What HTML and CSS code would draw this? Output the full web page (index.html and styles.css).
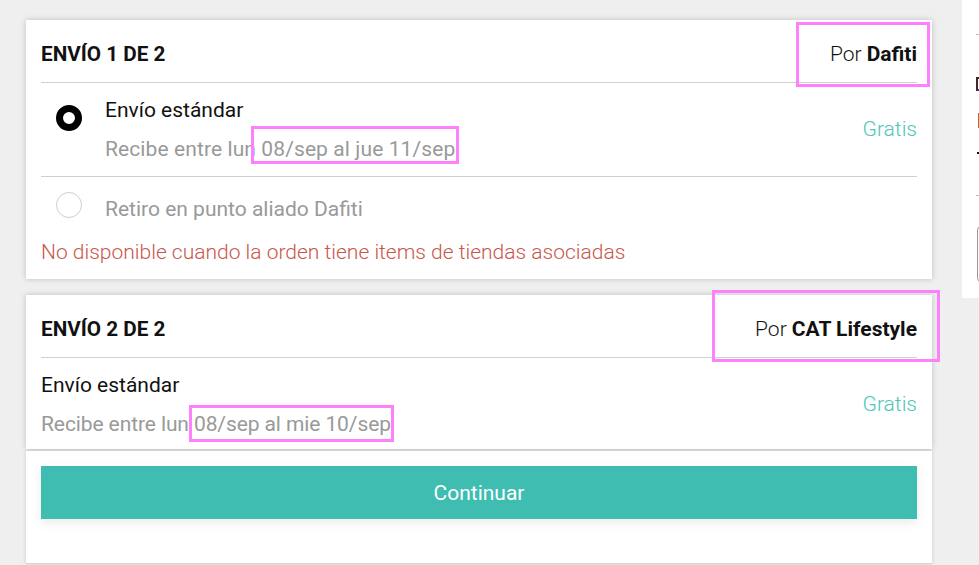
FILE: index.html
```html
<!DOCTYPE html>
<html lang="es">
<head>
<meta charset="utf-8">
<title>Envíos</title>
<link rel="stylesheet" href="styles.css">
</head>
<body>
<div class="page">
  <main class="checkout">
    <section class="card card-first">
      <header class="card-head">
        <h2 class="card-title">ENVÍO 1 DE 2</h2>
        <div class="seller">Por <b>Dafiti</b></div>
      </header>
      <div class="option option-selected">
        <span class="radio radio-on"></span>
        <div class="option-body">
          <div class="option-name">Envío estándar</div>
          <div class="option-date date-long">Recibe entre lun 08/sep al jue 11/sep</div>
        </div>
        <div class="price">Gratis</div>
      </div>
      <div class="option option-disabled">
        <span class="radio"></span>
        <div class="option-body">
          <div class="option-name">Retiro en punto aliado Dafiti</div>
        </div>
      </div>
      <p class="warning">No disponible cuando la orden tiene items de tiendas asociadas</p>
    </section>

    <section class="card card-second">
      <header class="card-head">
        <h2 class="card-title">ENVÍO 2 DE 2</h2>
        <div class="seller">Por <b>CAT Lifestyle</b></div>
      </header>
      <div class="option option-plain">
        <div class="option-body">
          <div class="option-name">Envío estándar</div>
          <div class="option-date date-short">Recibe entre lun 08/sep al mie 10/sep</div>
        </div>
        <div class="price">Gratis</div>
      </div>
    </section>

    <div class="actions">
      <button class="btn-continue" type="button">Continuar</button>
    </div>
  </main>

  <aside class="summary">
    <div class="sum-line"></div>
    <div class="sum-glyph"></div>
    <div class="sum-bar"></div>
    <div class="sum-dash"></div>
    <div class="sum-line sum-line-2"></div>
    <div class="sum-box"></div>
  </aside>
</div>

<div class="mark mark-1"></div>
<div class="mark mark-2"></div>
<div class="mark mark-3"></div>
<div class="mark mark-4"></div>
</body>
</html>
```

FILE: styles.css
```css
* { box-sizing: border-box; }

html, body {
  margin: 0;
  padding: 0;
  height: 100%;
}

body {
  background: #efefef;
  font-family: Roboto, "Liberation Sans", Arial, sans-serif;
  color: #111;
  overflow: hidden;
  position: relative;
}

.page {
  display: flex;
  align-items: flex-start;
  gap: 30px;
  padding-left: 26px;
}

.checkout {
  width: 906px;
  flex: none;
  padding-top: 20px;
  display: flex;
  flex-direction: column;
}

.card {
  background: #fff;
  padding: 0 15px;
  box-shadow: 0 0 6px rgba(0, 0, 0, 0.2);
}

.card-first {
  padding-bottom: 14px;
  margin-bottom: 16px;
}

.card-second {
  margin-bottom: 2px;
}

.card-head {
  display: flex;
  justify-content: space-between;
  align-items: baseline;
  padding: 22px 0 16px;
  border-bottom: 1px solid #cfcfcf;
}

.card-title {
  margin: 0;
  font-size: 20.7px;
  line-height: 24px;
  font-weight: 700;
  color: #111;
}

.seller {
  font-size: 21px;
  line-height: 24px;
  font-weight: 300;
  color: #111;
}

.seller b {
  font-weight: 700;
}

.option {
  display: flex;
  align-items: flex-start;
}

.option-selected {
  padding: 14px 0;
  border-bottom: 1px solid #cfcfcf;
  gap: 23px;
  padding-left: 15px;
}

.option-selected .radio {
  margin-top: 8px;
}

.option-disabled {
  padding: 15px 0 0 15px;
  gap: 23px;
}

.option-disabled .option-body {
  margin-top: 4px;
}

.option-plain {
  padding: 14px 0 12px;
}

.radio {
  flex: none;
  width: 26px;
  height: 26px;
  border-radius: 50%;
  border: 1px solid #cfcfcf;
  background: #fff;
}

.radio-on {
  border: 7px solid #000;
}

.option-body {
  flex: 1;
  display: flex;
  flex-direction: column;
  gap: 13px;
}

.option-name {
  font-size: 21px;
  line-height: 26px;
  color: #111;
}

.option-disabled .option-name {
  color: #999;
}

.option-date {
  font-size: 21px;
  line-height: 26px;
  color: #999;
}

.date-long {
  letter-spacing: 0.1px;
}

.date-short {
  letter-spacing: -0.1px;
}

.price {
  align-self: center;
  margin-top: -1px;
  font-size: 21px;
  line-height: 26px;
  font-weight: 300;
  color: #4cc6b9;
}

.warning {
  margin: 17px 0 0;
  font-size: 21px;
  line-height: 26px;
  font-weight: 300;
  color: #c8574b;
}

.actions {
  background: #fff;
  padding: 15px 15px 44px;
  box-shadow: 0 0 4px rgba(0, 0, 0, 0.15);
  border-bottom: 1px solid #d5d5d5;
}

.btn-continue {
  display: block;
  width: 100%;
  height: 53px;
  border: 0;
  background: #3ebdb0;
  color: #fff;
  font-family: Roboto, "Liberation Sans", Arial, sans-serif;
  font-size: 21px;
  box-shadow: 0 4px 10px rgba(0, 0, 0, 0.08);
  cursor: pointer;
}

.summary {
  flex: none;
  width: 300px;
  height: 298px;
  background: #fff;
  padding: 34px 0 0 14px;
  display: flex;
  flex-direction: column;
  align-items: flex-start;
}

.sum-line {
  width: 100%;
  height: 1px;
  background: #bbb;
}

.sum-glyph {
  margin-top: 42px;
  width: 6px;
  height: 14px;
  border-left: 2px solid #3a2a20;
  border-top: 2px solid #3a2a20;
  border-bottom: 2px solid #2a3a80;
}

.sum-bar {
  margin-top: 22px;
  margin-left: 2px;
  width: 2px;
  height: 15px;
  background: #c26a10;
}

.sum-dash {
  margin-top: 24px;
  margin-left: 1px;
  width: 8px;
  height: 2px;
  background: #111;
}

.sum-line-2 {
  margin-top: 41px;
}

.sum-box {
  margin-top: 30px;
  margin-left: 1px;
  width: 200px;
  height: 56px;
  border: 1px solid #999;
  border-radius: 4px;
}

.mark {
  position: absolute;
  border: 3px solid #ff80fc;
  pointer-events: none;
}

.mark-1 { left: 796px; top: 22px; width: 134px; height: 65px; }
.mark-2 { left: 251px; top: 126px; width: 208px; height: 38px; }
.mark-3 { left: 712px; top: 290px; width: 228px; height: 72px; }
.mark-4 { left: 189px; top: 405px; width: 205px; height: 37px; }
```
